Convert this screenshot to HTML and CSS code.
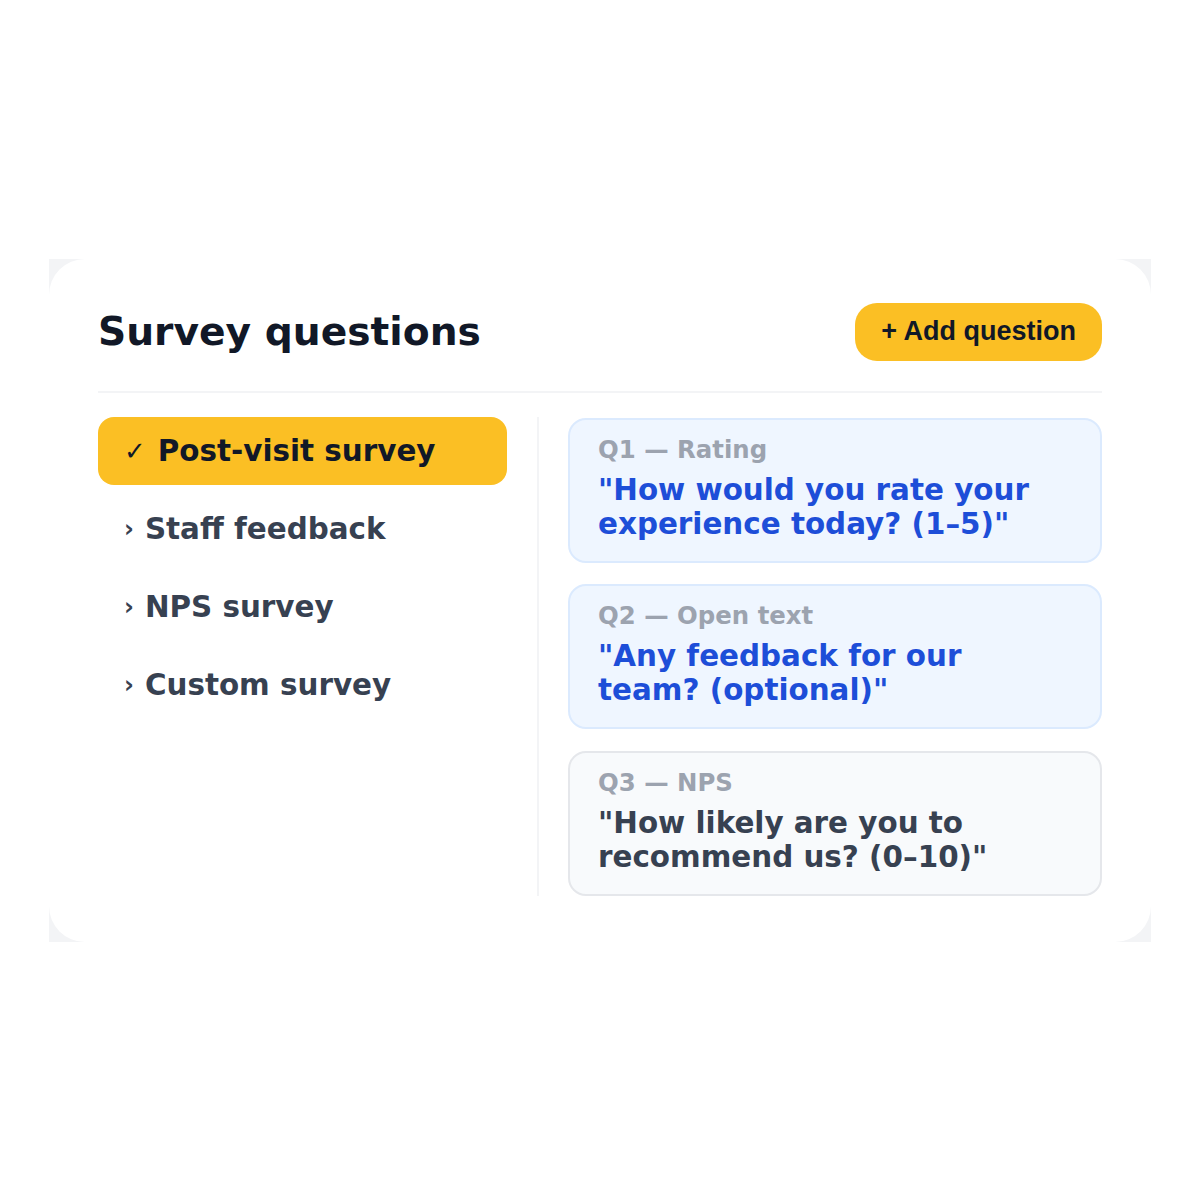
FILE: index.html
```html
<!DOCTYPE html>
<html>
<head>
<meta charset="utf-8">
<link rel="stylesheet" href="styles.css">
</head>
<body>
<div class="stage">
  <div class="frame">
    <div class="card">
      <div class="header">
        <h1 class="title">Survey questions</h1>
        <button class="add-btn">+ Add question</button>
      </div>
      <div class="body">
        <div class="menu">
          <div class="menu-item active"><span class="mark">✓</span><span>Post-visit survey</span></div>
          <div class="menu-item"><span class="chev">›</span><span>Staff feedback</span></div>
          <div class="menu-item"><span class="chev">›</span><span>NPS survey</span></div>
          <div class="menu-item"><span class="chev">›</span><span>Custom survey</span></div>
        </div>
        <div class="questions">
          <div class="q blue">
            <div class="q-label">Q1 — Rating</div>
            <div class="q-text">"How would you rate your experience today? (1–5)"</div>
          </div>
          <div class="q blue">
            <div class="q-label">Q2 — Open text</div>
            <div class="q-text">"Any feedback for our team? (optional)"</div>
          </div>
          <div class="q gray">
            <div class="q-label">Q3 — NPS</div>
            <div class="q-text">"How likely are you to recommend us? (0–10)"</div>
          </div>
        </div>
      </div>
    </div>
  </div>
</div>
</body>
</html>
```

FILE: styles.css
```css
* { box-sizing: border-box; }
html, body { margin: 0; padding: 0; background: #ffffff; }
body {
  font-family: "DejaVu Sans", sans-serif;
  width: 1200px;
  height: 1200px;
}
.stage {
  height: 1200px;
  display: flex;
  align-items: center;
  justify-content: center;
}
.frame {
  width: 1102px;
  background: #f3f4f6;
}
.card {
  background: #ffffff;
  border-radius: 36px;
  padding: 44px 49px 46px 49px;
}
.header {
  display: flex;
  align-items: center;
  justify-content: space-between;
  padding-bottom: 30px;
  border-bottom: 2px solid #f3f4f6;
}
.title {
  margin: 0;
  font-size: 39.2px;
  font-weight: 700;
  color: #111827;
  line-height: 58px;
}
.add-btn {
  font-family: "Liberation Sans", Arial, sans-serif;
  font-weight: 700;
  font-size: 27px;
  color: #111827;
  background: #fbbf24;
  border: none;
  border-radius: 22px;
  height: 58px;
  padding: 0 26px;
}
.body {
  display: grid;
  grid-template-columns: 409px 1fr;
  column-gap: 30px;
  margin-top: 24px;
}
.menu {
  display: flex;
  flex-direction: column;
  gap: 10px;
}
.menu-item {
  height: 68px;
  display: flex;
  align-items: center;
  padding-left: 26px;
  border-radius: 16px;
  font-size: 29.4px;
  font-weight: 700;
  color: #374151;
}
.menu-item.active {
  background: #fbbf24;
  color: #111827;
}
.mark {
  font-size: 26px;
  font-weight: 700;
  margin-right: 12px;
}
.chev {
  font-size: 24px;
  margin-right: 11px;
}
.questions {
  border-left: 2px solid #f3f4f6;
  padding-left: 29px;
  padding-top: 1px;
  display: flex;
  flex-direction: column;
  gap: 21.5px;
}
.q {
  border-radius: 18px;
  border: 2px solid #dbeafe;
  background: #eff6ff;
  padding: 16px 28px 20px 28px;
  height: 145px;
}
.q.gray {
  border-color: #e5e7eb;
  background: #f8fafc;
}
.q-label {
  font-size: 24.4px;
  font-weight: 700;
  color: #9ca3af;
  line-height: 28px;
  margin-bottom: 9px;
}
.q-text {
  font-size: 29.4px;
  font-weight: 700;
  line-height: 34px;
  color: #1d4ed8;
}
.q.gray .q-text { color: #374151; }
```
